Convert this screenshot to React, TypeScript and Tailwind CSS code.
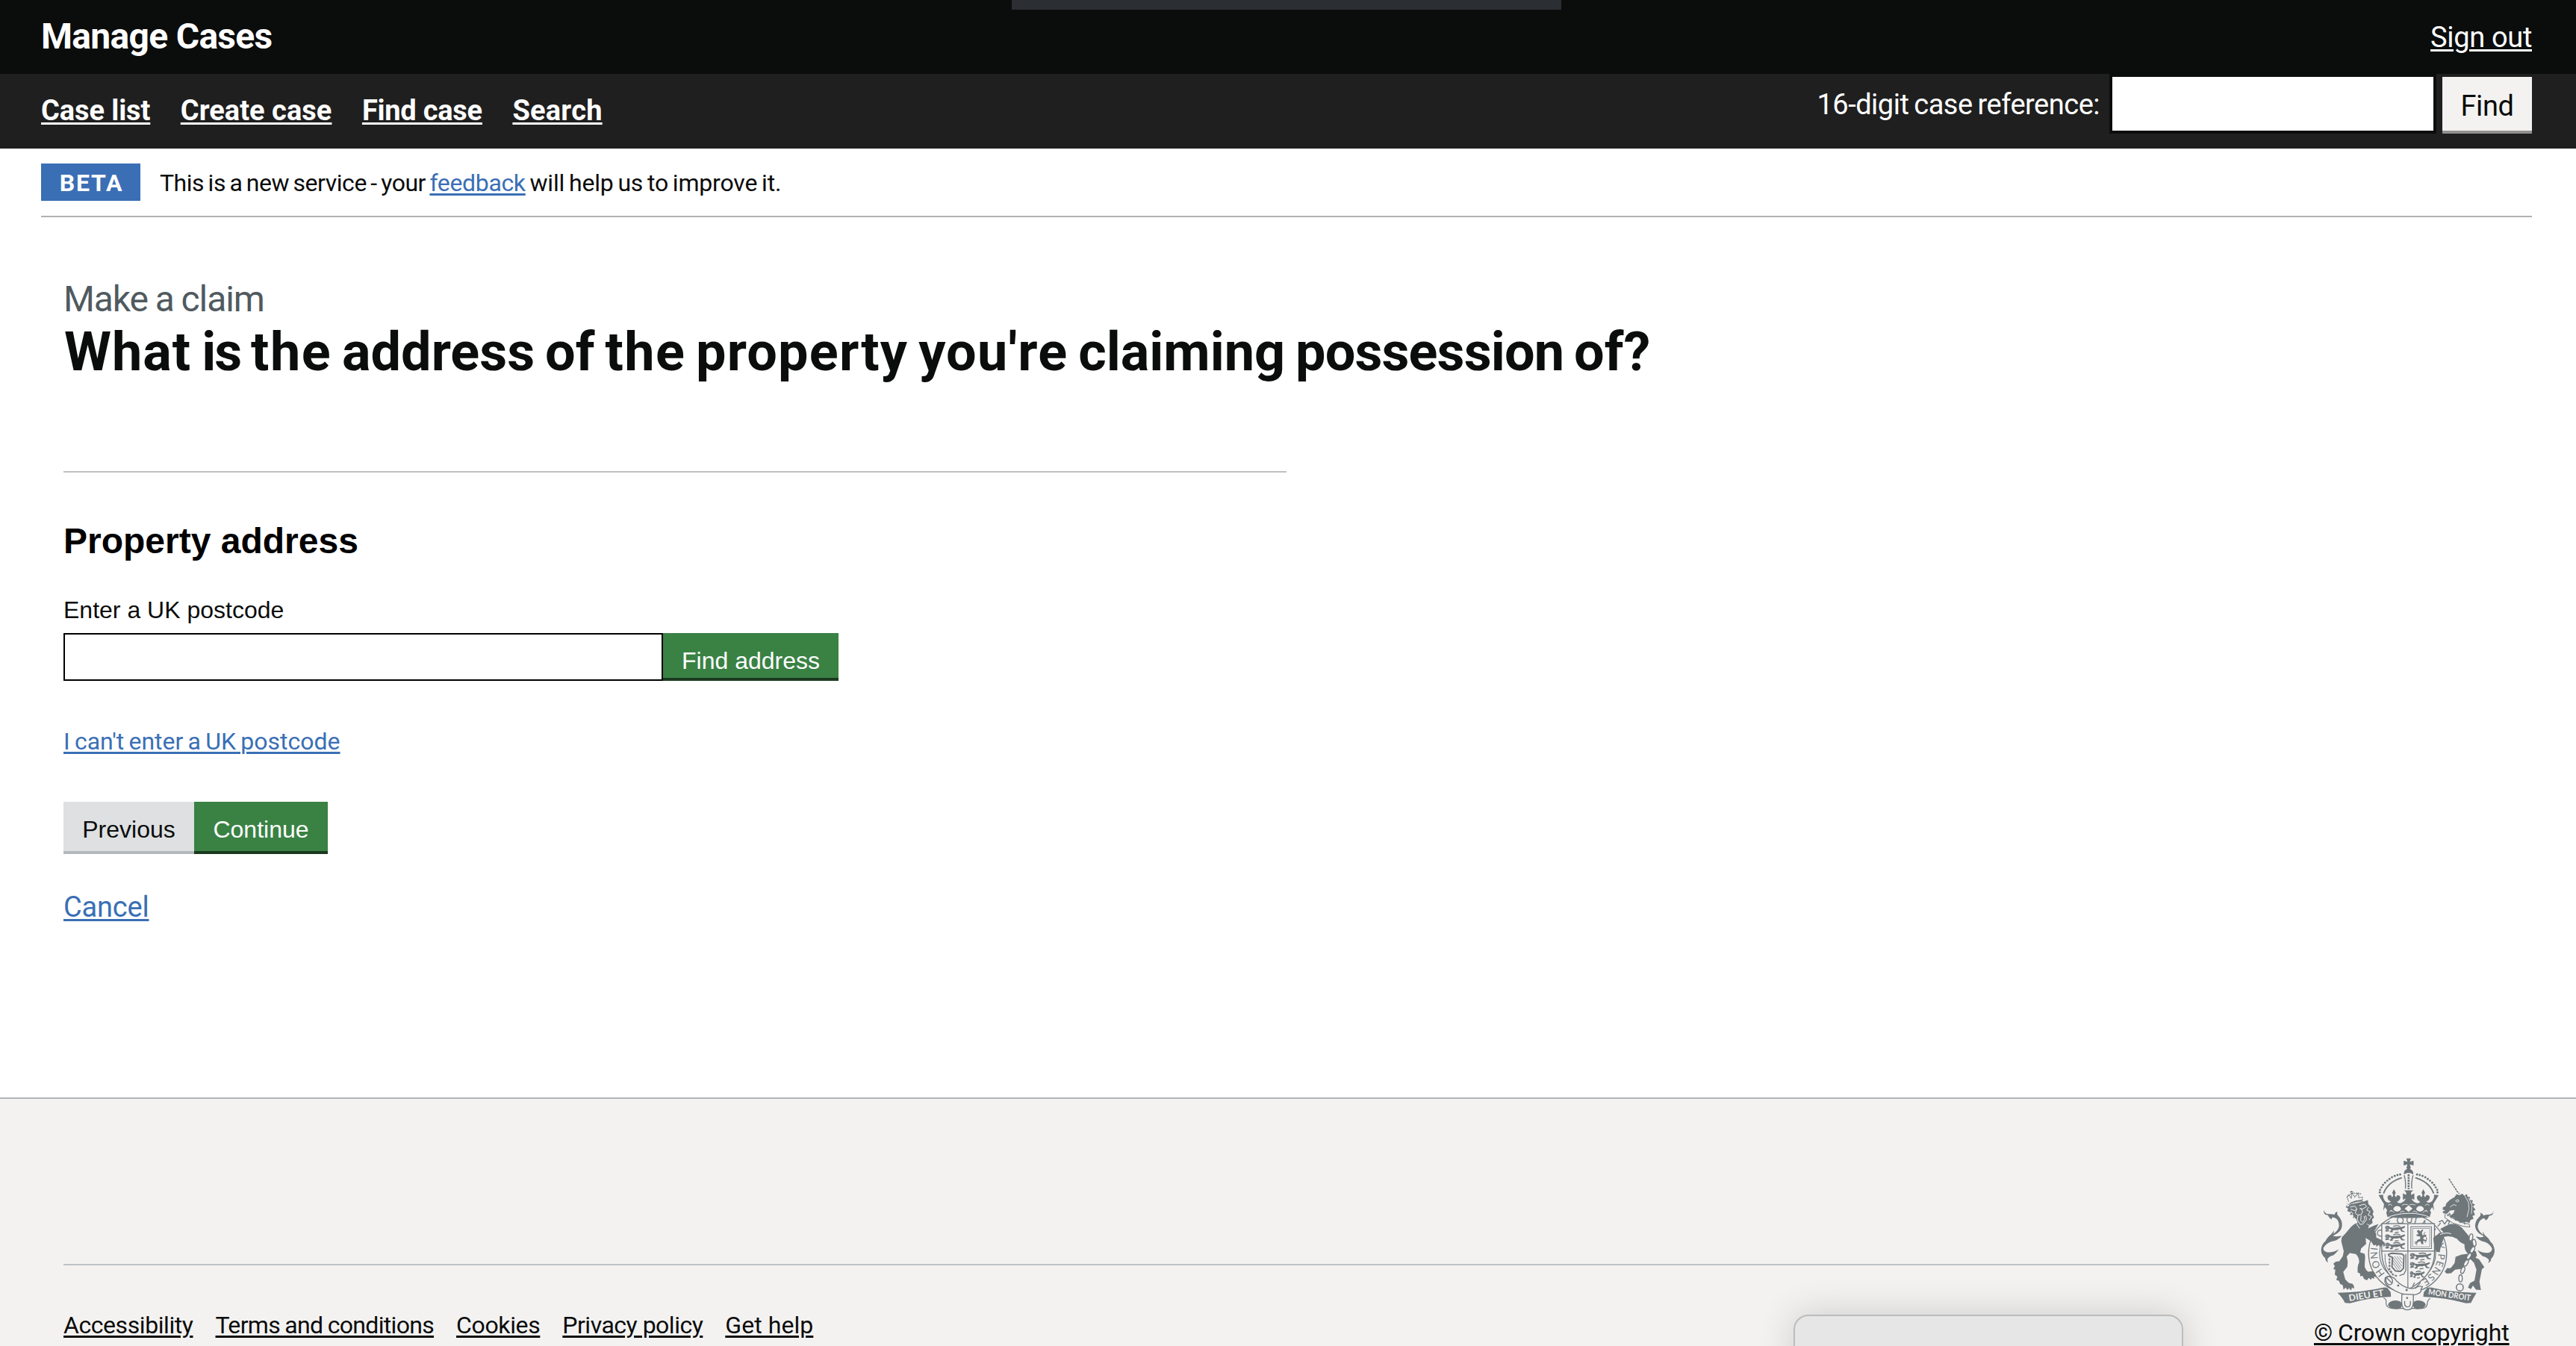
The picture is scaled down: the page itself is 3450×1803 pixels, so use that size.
import type { ReactNode } from "react";

const INK = "#6f777b";
const PAPER = "#f3f2f1";

function PassantLion({ x, y, w = 84 }: { x: number; y: number; w?: number }) {
  return (
    <g transform={`translate(${x} ${y}) scale(${w / 84} 1)`} fill={INK}>
      <path d="M2 3l8-3 9 3 3 6-5 6-9 1-6-4zM17 5q12 5 25 2l20-1q12-1 16-5l5 4q-6 7-15 8l4 7 8 2-1 4-12-2-6-9-22 1-8 5 2 5-11 1-2-4 7-5-4-4zM2 18l9-2 8 3-4 4-12 1z" />
      <path d="M62 3q-14-6-28 0M30 13q14 5 26 1" fill="none" stroke={INK} strokeWidth="4" />
      <path d="M40 28l16-2" stroke={INK} strokeWidth="4" />
      <path d="M5 5l5 2M9 11l5-2" fill="none" stroke={PAPER} strokeWidth="1.5" />
    </g>
  );
}

function CrownHalf() {
  const beads: [number, number][] = [
    [323, 203], [324, 193], [330, 183], [336, 173], [344, 164], [353, 156], [362, 149], [372, 142], [383, 137], [394, 133], [405, 131],
  ];
  return (
    <g>
      {beads.map(([x, y]) => (
        <circle key={x} cx={x} cy={y} r="4.3" fill={INK} />
      ))}
      <path d="M338 207Q356 160 412 144" fill="none" stroke={INK} strokeWidth="6" />
      <path d="M421 134Q429 160 426 188" fill="none" stroke={INK} strokeWidth="4" />
      <path
        fill={INK}
        d="M318 214l18-2q0 22 14 30 10 5 18-2-14-5-14-18 3-11 15-8-1 6 5 8l3-8-4-10 7-14 7 14-4 10 4 8q6-2 5-8 12-1 14 9-1 12-14 18 8 8 18 4 14-6 17-18l-11 6v-26l12 6q6-8-8-18h20v111h-2q-48 0-84-3-3-14-7-24l-10-5 3-24z"
      />
      <path fill={PAPER} d="M338 274l6-12 9 12-6 14-8-4z" />
      <ellipse cx="393" cy="269" rx="15" ry="11" fill={PAPER} />
      <path d="M361 281q12-10 20 4M404 284q8-10 18-3" fill="none" stroke={PAPER} strokeWidth="2.5" />
      <circle cx="369" cy="276" r="2.5" fill={PAPER} />
      <path d="M356 254q10-8 17 2M412 254q12-6 24-1" fill="none" stroke={PAPER} strokeWidth="2.5" />
    </g>
  );
}

function RoyalArms() {
  return (
    <svg viewBox="86 64 698 616" className="h-[205px] w-[233px]" aria-label="Royal coat of arms">
      <defs>
        <path id="garter" d="M345 530A122 122 0 1 1 488 558" />
      </defs>

      {/* garter ring and motto */}
      <circle cx="435" cy="448" r="157" fill={PAPER} stroke={INK} strokeWidth="4" />
      <circle cx="435" cy="448" r="113" fill="none" stroke={INK} strokeWidth="3.5" />
      <text fill={INK} fontFamily="Lato" fontSize="39" fontWeight="400">
        <textPath href="#garter" textLength="606">HONI SOIT QUI MAL Y PENSE</textPath>
      </text>

      {/* shield */}
      <path d="M331 329H543V450Q540 540 437 594 334 540 331 450Z" fill={PAPER} stroke={INK} strokeWidth="4" />
      <path d="M436 329V590M331 439H543" stroke={INK} strokeWidth="3.5" />
      <PassantLion x={343} y={337} />
      <PassantLion x={343} y={371} />
      <PassantLion x={343} y={405} />
      <rect x="448" y="341" width="83" height="88" fill="none" stroke={INK} strokeWidth="3" />
      <rect x="455" y="348" width="69" height="74" fill="none" stroke={INK} strokeWidth="2" />
      <path
        fill={INK}
        d="M472 358l8-4 6 6 8-8 4 2-6 12 3 10 14-3 2 5-12 6-1 7 12 4-2 5-11-2 2 12-8 2-4-12-10 2-5 8-5-4 8-12 11-4-1-10-13-1-2-6 9-2z"
      />
      <path d="M507 362q-12 10 0 18 10 10-2 26M466 400q-4 12 8 14" fill="none" stroke={INK} strokeWidth="3" />
      <path d="M344 450q-4 60 32 84" fill="none" stroke={INK} strokeWidth="3" />
      <path d="M358 452l14-4 40 3 8 6-2 52-12 12-20-2-14-16 2-38-14-6z" fill="none" stroke={INK} strokeWidth="6" strokeLinejoin="round" />
      <path d="M374 462l34 46M374 474l30 40M374 486l22 30M382 460l30 40M392 460l22 28M402 460l12 14" stroke={INK} strokeWidth="2.5" />
      <path d="M362 468v44l14 22 16 6" fill="none" stroke={INK} strokeWidth="6" strokeDasharray="9 4" />
      <path d="M428 450v66l-8 16-18 6" fill="none" stroke={INK} strokeWidth="4" />
      <PassantLion x={443} y={447} w={90} />
      <PassantLion x={443} y={483} w={84} />
      <PassantLion x={443} y={520} w={62} />

      {/* buckle and strap */}
      <path
        d="M345 546q14-12 36 2 20 26 50 38 22 8 38 0 12-8 26-4-8 10-6 16 0 10-22 16-40 8-84-16-34-18-40-36z"
        fill={PAPER} stroke={INK} strokeWidth="4" strokeLinejoin="round"
      />
      <ellipse cx="361" cy="558" rx="13" ry="17" fill="none" stroke={INK} strokeWidth="4" transform="rotate(-20 361 558)" />
      <path d="M352 548l20 20" stroke={INK} strokeWidth="4" />
      <circle cx="397" cy="578" r="4.5" fill={INK} />
      <circle cx="431" cy="596" r="4.5" fill={INK} />
      <path d="M455 580l8-14M465 590l22-24" stroke={INK} strokeWidth="4" />

      {/* base scrolls */}
      <path d="M338 628q14 4 10 22 2 18 26 20h120q20-2 20-20 2-14 12-20" fill={PAPER} stroke={INK} strokeWidth="3.5" />
      <path fill={INK} d="M356 656q4-18 34-18 24 2 22 20-2 14-20 15-30 0-36-17zM508 656q-4-18-34-18-18 2-18 18 2 16 18 17 28 0 34-17z" />
      <path d="M412 612l46 2v32q-2 30-24 30t-23-30z" fill={PAPER} stroke={INK} strokeWidth="4" />
      <path d="M423 640v12q2 12 11 12 11 0 12-12v-12" fill="none" stroke={INK} strokeWidth="4" />
      <circle cx="433" cy="628" r="4" fill={INK} />

      {/* motto ribbons */}
      <path fill={INK} d="M153 607q100-2 188-22l12 2 14 18 1 18q-90 4-165 26l-20-1q-10-22-30-41z" />
      <path fill={INK} d="M712 607q-100-2-184-22l-14 2-14 18-2 18q90 4 172 26l20-1q10-22 22-41z" />
      <g fill={PAPER} fontFamily="Lato" fontSize="36" fontWeight="700">
        <text x="200" y="641" transform="rotate(-9 200 641)" textLength="142" lengthAdjust="spacingAndGlyphs">DIEU ET</text>
        <text x="517" y="614" fontSize="33" transform="rotate(8.5 517 614)" textLength="172" lengthAdjust="spacingAndGlyphs">MON DROIT</text>
      </g>

      {/* royal crown */}
      <CrownHalf />
      <g transform="translate(878 0) scale(-1 1)">
        <CrownHalf />
      </g>
      <path fill={PAPER} d="M423 268l16-13 16 13-16 13z" />
      <path d="M348 306Q388 288 439 287T530 306" fill="none" stroke={PAPER} strokeWidth="3" />
      <path fill={INK} d="M430 66h18l-4 14 15-5v20l-15-5 4 16h-18l4-16-15 5V75l15 5z" />
      <path fill={INK} d="M433 104h12q-2 5 2 6 12 6 11 21l-12-6h-14l-12 6q-1-16 11-21 4-1 2-6z" />
      <path d="M439 130V190" stroke={INK} strokeWidth="8" strokeDasharray="8 3" />

      {/* lion supporter */}
      <path
        fill={INK}
        d="M193 262l10-10 60-14 12-4 2 16 12 12 9 18-4 10 6 14-8 8 2 14-14 10-4 12 20-10 22-8-16 28q10 14 6 26l20 10 14 10 2 12-6 6-2-10-6 4-6 6-6-8-8 8-2-8-10 2-10-16-22-14 2 24-20 18-4 16 18 6 2 12-2 40q4 14 14 20l20-2 10 12 2 12-8-2 1 9-10-4-3 8-9-8-8 10-12-6-5-12-9 2-2-12-9-4q-2-26 6-40 0-22-14-34l-24-4-12 14 4 22-2 20-16 20 8 30 14 14 16 4 6 12-2 8-7-6-3 12-9-9-6 8-7-10-9 8-3-18-10-4-6-14-10-2 4-14-10-8 2-20-8-2 6-12-6-10 10-8 14-2 14-20 4-20-10-40 2-16q14-14 30-34 14-18 34-26l-8-16-12-2 4-10-16-4 6-8-16-6 4-10-10-6 6-10-4-12z"
      />
      <path
        d="M203 262l20-4 8 12-10 6-16-6M240 256l22-6 8 10-16 10-12-2M230 270l-6 16 10 8 14-2 6-12-8-14M236 294l-4 18 12 20 12-2 14-18-4-16M248 296l-2 20 8 8 8-12-2-14M206 278l8 10-6 14 12 8M278 262l-8 12 14 6-8 14 14 6-10 14M272 330l16 10M220 302l10 28 12 18"
        fill="none" stroke={PAPER} strokeWidth="3" strokeLinejoin="round"
      />
      <path d="M196 252q28-14 58-14M198 240l-7-18 7-10 10 14 4-22 10 18 14-16 3 18 14-2-1 20M209 196v12M203 201h13M191 222q20-24 58-12" fill="none" stroke={INK} strokeWidth="3.5" strokeDasharray="6 2" />
      <path d="M203 247q22-10 48-12" stroke={INK} strokeWidth="5" fill="none" />
      <path
        fill={INK}
        d="M97 274q6 18 24 16 14 1 20 2 2-10 12-12-4 10 2 16 18 18 16 42-2 18-20 30l-17 10 14 2 22-2q-18 20-38 22-24 6-36 26-2 14 16 18 24 2 46-12-10 16-22 24-18 4-24 16l2 14q-12-10-10-18-18-14-17-36 2-22 18-34 6-14 24-28l10-14-2 14q20-16 22-32 0-18-10-28-10-8-18-6l-2 8-8-6-8-12-10-2q-8-8-6-18z"
      />

      {/* unicorn supporter */}
      <path d="M601 148l34 52 8 8" stroke={INK} strokeWidth="4.5" strokeDasharray="9 2.5" fill="none" />
      <path
        fill={INK}
        d="M576 264l12-6 2-10 14-14 20-12 8-12 10 4 14-6 6 8 12-6 2 10 10 2-2 10 14 4-4 10 12 6-8 8 10 12-8 6 6 16-10 4 4 12-12 4-4 12-12-4-16 2-22-8-28-18 14-12 4-12-18 2-10 10-16 2-5-8 12-4-10-3z"
      />
      <path d="M628 236l10-4 4 6-9 4zM606 262l14-10 12 4M664 214l16 30 2 26-8 32M680 226l14 30-2 34" fill="none" stroke={PAPER} strokeWidth="2.5" />
      <path d="M588 284l14 14 22 14 34 14 24 4 4 12-26-2-44-14-32-22z" fill={PAPER} stroke={INK} strokeWidth="3" />
      <path d="M594 298l10-10 6 16 12-8 6 18 14-8 4 18 14-8 6 16" fill="none" stroke={INK} strokeWidth="4" />
      <path
        fill={INK}
        d="M566 350l22-12 20-8q28-2 46 16l20 24q14 14 24 40l4 24 8 8 4 16-6 8 14 6 22 32-10 8-10 50 6 34-20-2-12-16-8 14-12-6 8-18 18-10 8-44-10-28-14-14-20 14-12 24-30 4-16 14-18 2-8-8 10-14 14 0 16-20 4-26q24-10 50-12-16-14-14-38-18-6-30-22-22-12-42-10l-10 2-14 42-4 20-14-2-10-38-2-18 10-6 14-14 18-2z"
      />
      <path d="M566 372q28-10 44-2" fill="none" stroke={PAPER} strokeWidth="3" />
      <path d="M552 400l-4 34M560 322l14-6 10 14 10-14 10 4-6 14M556 340l12-14" fill="none" stroke={INK} strokeWidth="4" />
      <path
        fill={INK}
        d="M783 276q-6 18-24 16-12 0-18 4-4-8-14-12 4 10-2 16-20 18-18 42 4 20 22 30l14 8-14 4-20-4q16 20 36 22 22 8 30 28-2 14-16 16-24 2-44-12 10 16 22 26 18 4 26 16l-4 12q14-8 12-18 14-12 14-34-2-22-16-34-8-16-24-28l-8-14 2 14q-20-16-22-32 2-18 12-28 8-8 16-6l4 8 8-6 6-12 12-4q6-8 6-16z"
      />
      {[[690, 384, 10], [703, 406, -10], [696, 434, 30], [682, 460, 30], [670, 487, 30], [657, 516, 20], [648, 549, 0]].map(([cx, cy, a]) => (
        <ellipse key={cy} cx={cx} cy={cy} rx="7" ry="14" fill={PAPER} stroke={INK} strokeWidth="4" transform={`rotate(${a} ${cx} ${cy})`} />
      ))}
      <circle cx="645" cy="585" r="14" fill="none" stroke={INK} strokeWidth="4.5" />
    </svg>
  );
}

function NavLink({ children, className }: { children: ReactNode; className: string }) {
  return (
    <a href="#" className={`text-[38px] leading-[48px] font-bold underline decoration-[3px] underline-offset-[3px] [text-decoration-skip-ink:none] ${className}`}>
      {children}
    </a>
  );
}

function FooterLink({ children, className }: { children: ReactNode; className: string }) {
  return (
    <a href="#" className={`block text-[32px] leading-10 whitespace-nowrap underline decoration-[3px] underline-offset-[3px] ${className}`}>
      {children}
    </a>
  );
}

export default function App() {
  return (
    <div className="relative flex h-[1803px] w-[3450px] flex-col overflow-hidden bg-white font-['Roboto',sans-serif] text-[#0b0c0c]">
      <header className="flex h-[99px] shrink-0 items-start justify-between bg-[#0b0c0c] pr-[59px] pl-[55px] text-white">
        <span className="mt-[19px] text-[48px] leading-[60px] font-bold tracking-[-0.7px]">Manage Cases</span>
        <a href="#" className="mt-[26px] text-[38px] leading-[48px] tracking-[-0.33px] underline decoration-[3px] underline-offset-[3px]">Sign out</a>
      </header>

      <nav className="flex h-[100px] shrink-0 items-start justify-between bg-[#1f1f1f] pr-[59px] pl-[55px] text-white">
        <div className="mt-[25px] flex gap-[40.5px]">
          <NavLink className="tracking-[-0.1px]">Case list</NavLink>
          <NavLink className="tracking-[0.03px]">Create case</NavLink>
          <NavLink className="tracking-[-0.25px]">Find case</NavLink>
          <NavLink className="tracking-[0.23px]">Search</NavLink>
        </div>
        <form className="flex items-start">
          <label className="mt-[17px] mr-[13px] text-[38px] leading-[48px] tracking-[-0.5px] [word-spacing:-2px]">16-digit case reference:</label>
          <input className="h-20 w-[438px] border-4 border-[#0b0c0c] bg-white" />
          <button type="button" className="mt-1 ml-2 h-[76px] w-[120px] border-b-4 border-[#929191] bg-[#f3f2f1] text-[38px] leading-[78px] tracking-[-0.4px] text-[#0b0c0c]">
            Find
          </button>
        </form>
      </nav>

      <div className="mr-[59px] ml-[55px] flex h-[92px] shrink-0 items-start border-b-2 border-[#b1b1b1] pt-5">
        <strong className="h-[50px] w-[133px] bg-[#3a6fb5] pl-0.5 text-center text-[32px] leading-[52px] tracking-[1.8px] text-white">BETA</strong>
        <p className="ml-[26px] text-[32px] leading-[52px] tracking-[-0.17px] [word-spacing:-2px]">
          <span className="tracking-[-0.47px]">This is a new service - your </span>
          <a href="#" className="tracking-[-0.35px] text-[#3a6fb5] underline decoration-[3px] underline-offset-[3px]">feedback</a> will help us to improve it.
        </p>
      </div>

      <main className="flex flex-col items-start pt-20 pl-[85px]">
        <p className="text-[48px] leading-[60px] tracking-[-1.1px] text-[#505a5f] [word-spacing:-1px]">Make a claim</p>
        <h1 className="pl-px text-[72px] leading-[82px] font-bold whitespace-nowrap [word-spacing:-4px]">
          <span className="tracking-[1px]">What</span> <span className="tracking-[-2px]">is</span>{" "}
          <span className="tracking-[1.5px]">the</span> address of <span className="tracking-[1.4px]">the</span>{" "}
          <span className="tracking-[1.2px]">property</span> <span className="tracking-[1.2px]">you're</span> claiming{" "}
          <span className="tracking-[-0.9px]">possession</span> of?
        </h1>
        <hr className="mt-[118px] h-0.5 w-[1638px] border-0 bg-[#bfbfbf]" />
        <h2 className="mt-[62px] font-['Liberation_Sans',sans-serif] text-[48px] leading-[60px] font-bold text-black">Property address</h2>
        <label className="mt-[42px] font-['Liberation_Sans',sans-serif] text-[32px] leading-10">Enter a UK postcode</label>
        <div className="mt-[11px] flex font-['Liberation_Sans',sans-serif] text-[32px]">
          <input className="h-16 w-[803px] border-2 border-black bg-white" />
          <button type="button" className="h-16 w-[235px] border-b-4 border-[#1a3a1f] bg-[#398244] leading-[75px] text-white">Find address</button>
        </div>
        <a href="#" className="mt-[61px] text-[32px] leading-10 text-[#3a6fb5] underline decoration-[3px] underline-offset-[3px] [word-spacing:-1.7px]">
          I can't enter a UK postcode
        </a>
        <div className="mt-[61px] flex font-['Liberation_Sans',sans-serif] text-[32px]">
          <button type="button" className="h-[70px] w-[175px] border-b-4 border-[#b5b9bc] bg-[#dee0e2] leading-[75px]">Previous</button>
          <button type="button" className="h-[70px] w-[179px] border-b-4 border-[#1a3a1f] bg-[#398244] leading-[75px] text-white">Continue</button>
        </div>
        <a href="#" className="mt-[47px] text-[38px] leading-[48px] tracking-[-0.2px] text-[#3a6fb5] underline decoration-[3px] underline-offset-[3px]">Cancel</a>
      </main>

      <footer className="mt-auto flex h-[333px] shrink-0 items-start justify-between border-t-2 border-[#b1b4b6] bg-[#f3f2f1] pr-[89px] pl-[85px]">
        <div className="mt-[221px] w-[2954px] border-t-2 border-[#bfc1c3] pt-[60px]">
          <div className="flex gap-[30px]">
            <FooterLink className="tracking-[-0.43px]">Accessibility</FooterLink>
            <FooterLink className="tracking-[-0.68px] [word-spacing:-1px]">Terms and conditions</FooterLink>
            <FooterLink className="tracking-[-0.36px]">Cookies</FooterLink>
            <FooterLink className="tracking-[-0.5px]">Privacy policy</FooterLink>
            <FooterLink className="tracking-[0.06px]">Get help</FooterLink>
          </div>
        </div>
        <div className="mt-[79px] flex w-[262px] flex-col">
          <div className="h-[214px] pl-[9px]">
            <RoyalArms />
          </div>
          <FooterLink className="tracking-[-0.08px] [word-spacing:-1px]">© Crown copyright</FooterLink>
        </div>
      </footer>

      {/* floating windows at the screen's edges */}
      <div className="absolute top-0 left-[1355px] h-[13px] w-[736px] bg-[#2b2e32]" />
      <div className="absolute top-[1761px] left-[2402px] h-[80px] w-[522px] rounded-[20px] border-2 border-[#bcbcbc] bg-[#e6e6e6] shadow-[0_0_50px_rgba(0,0,0,0.16)]" />
    </div>
  );
}
